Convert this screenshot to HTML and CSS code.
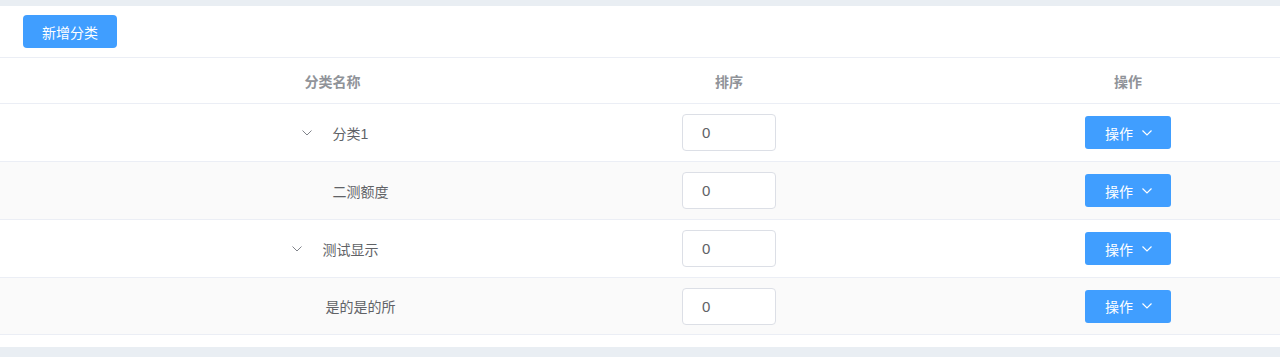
FILE: index.html
```html
<!DOCTYPE html>
<html lang="zh-CN">
    <head>
        <meta charset="UTF-8">
        <title>分类管理</title>
        <link rel="stylesheet" href="styles.css">
    </head>
    <body>
        <div class="card">
            <div class="toolbar">
                <button class="btn-primary">新增分类</button>
            </div>
            <div class="table">
                <div class="row head">
                    <div class="cell">分类名称</div>
                    <div class="cell">排序</div>
                    <div class="cell col-op">操作</div>
                </div>

                <div class="row">
                    <div class="cell">
                        <div class="tree">
                            <span class="expand">
                                <svg width="10" height="6" viewBox="0 0 10 6"><path d="M0.5 0.5 L5 5 L9.5 0.5" fill="none" stroke="#80838a" stroke-width="1"/></svg>
                            </span>
                            <span class="name">分类1</span>
                        </div>
                    </div>
                    <div class="cell"><input class="sort" type="text" value="0"></div>
                    <div class="cell col-op">
                        <button class="btn-op">操作
                            <svg width="10" height="6" viewBox="0 0 10 6"><path d="M0.5 0.5 L5 5 L9.5 0.5" fill="none" stroke="#fff" stroke-width="1.2"/></svg>
                        </button>
                    </div>
                </div>

                <div class="row striped">
                    <div class="cell">
                        <div class="tree">
                            <span class="indent"></span>
                            <span class="expand"></span>
                            <span class="name">二测额度</span>
                        </div>
                    </div>
                    <div class="cell"><input class="sort" type="text" value="0"></div>
                    <div class="cell col-op">
                        <button class="btn-op">操作
                            <svg width="10" height="6" viewBox="0 0 10 6"><path d="M0.5 0.5 L5 5 L9.5 0.5" fill="none" stroke="#fff" stroke-width="1.2"/></svg>
                        </button>
                    </div>
                </div>

                <div class="row">
                    <div class="cell">
                        <div class="tree">
                            <span class="expand">
                                <svg width="10" height="6" viewBox="0 0 10 6"><path d="M0.5 0.5 L5 5 L9.5 0.5" fill="none" stroke="#80838a" stroke-width="1"/></svg>
                            </span>
                            <span class="name">测试显示</span>
                        </div>
                    </div>
                    <div class="cell"><input class="sort" type="text" value="0"></div>
                    <div class="cell col-op">
                        <button class="btn-op">操作
                            <svg width="10" height="6" viewBox="0 0 10 6"><path d="M0.5 0.5 L5 5 L9.5 0.5" fill="none" stroke="#fff" stroke-width="1.2"/></svg>
                        </button>
                    </div>
                </div>

                <div class="row striped">
                    <div class="cell">
                        <div class="tree">
                            <span class="indent"></span>
                            <span class="expand"></span>
                            <span class="name">是的是的所</span>
                        </div>
                    </div>
                    <div class="cell"><input class="sort" type="text" value="0"></div>
                    <div class="cell col-op">
                        <button class="btn-op">操作
                            <svg width="10" height="6" viewBox="0 0 10 6"><path d="M0.5 0.5 L5 5 L9.5 0.5" fill="none" stroke="#fff" stroke-width="1.2"/></svg>
                        </button>
                    </div>
                </div>
            </div>
        </div>
    </body>
</html>
```

FILE: styles.css
```css
* {
    box-sizing: border-box;
    font-family: "Liberation Sans", "Noto Sans CJK SC", sans-serif;
}

body {
    margin: 0;
    background: #e9eef3;
    padding-top: 6px;
}

.card {
    background: #fff;
    padding-bottom: 12px;
}

.toolbar {
    padding: 9px 23px 9px 23px;
}

.btn-primary {
    width: 94px;
    height: 33px;
    border: none;
    border-radius: 4px;
    background: #409eff;
    color: #fff;
    font-size: 14px;
    padding: 0;
    cursor: pointer;
}

.table {
    border-top: 1px solid #ebeef5;
}

.row {
    display: grid;
    grid-template-columns: 665px 128px 1fr;
    height: 58px;
    border-bottom: 1px solid #ebeef5;
    color: #606266;
    font-size: 14px;
}

.row:last-child {
    height: 57px;
}

.row.head {
    height: 46px;
    color: #909399;
    font-weight: bold;
}

.row.striped {
    background: #fafafa;
}

.cell {
    display: flex;
    align-items: center;
    justify-content: center;
}

.col-op {
    padding-left: 183px;
}

.tree {
    display: flex;
    align-items: center;
}

.indent {
    width: 20px;
}

.expand {
    width: 20px;
    margin-right: 16px;
    display: flex;
    justify-content: center;
}

.sort {
    width: 94px;
    height: 37px;
    border: 1px solid #dcdfe6;
    border-radius: 4px;
    padding: 0 0 0 19px;
    font-size: 15px;
    color: #606266;
    background: #fff;
    outline: none;
}

.btn-op {
    width: 86px;
    height: 33px;
    border: none;
    border-radius: 3px;
    background: #409eff;
    color: #fff;
    font-size: 14px;
    padding: 0 0 0 1px;
    display: flex;
    align-items: center;
    justify-content: center;
    gap: 9px;
    cursor: pointer;
}
```
